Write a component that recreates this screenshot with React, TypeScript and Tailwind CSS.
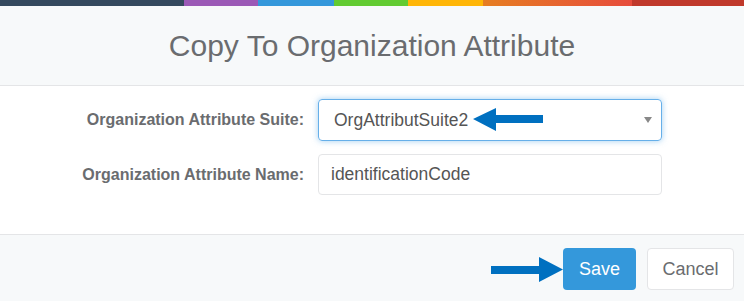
import React from "react";

const font = { fontFamily: '"Liberation Sans", Arial, sans-serif' };

function ArrowLeft() {
    return (
        <svg className="absolute left-[473px] top-[108px]" width="71" height="24" viewBox="0 0 71 24">
            <polygon points="0,11 23,0 23,7 70,7 70,15 23,15 23,23" fill="#0070c0" />
        </svg>
    );
}

function ArrowRight() {
    return (
        <svg className="absolute left-[491px] top-[257px]" width="73" height="26" viewBox="0 0 73 26">
            <polygon points="0,9 48,9 48,0 72,12.5 48,25 48,17 0,17" fill="#0070c0" />
        </svg>
    );
}

export default function App() {
    return (
        <div className="relative w-[744px] h-[301px] bg-white overflow-hidden text-[#6a6c6f]" style={font}>
            {/* color line */}
            <div className="h-[6px] w-full bg-[linear-gradient(to_right,#34495e_0%,#34495e_24.7%,#9b59b6_24.7%,#9b59b6_34.7%,#3498db_34.7%,#3498db_44.9%,#62cb31_44.9%,#62cb31_54.9%,#ffb606_54.9%,#ffb606_64.9%,#e67e22_64.9%,#e74c3c_85%,#c0392b_85%,#c0392b_100%)]" />

            <div className="h-[80px] bg-[#f7f9fa] border-b border-[#e4e5e7] flex items-center justify-center">
                <h4 className="text-[30px] text-[#6a6c6f] leading-none mt-[1px]">Copy To Organization Attribute</h4>
            </div>

            <div className="h-[148px] pt-[13px] flex flex-col gap-[13px]">
                <div className="flex items-center">
                    <label className="w-[304px] text-right text-[16px] font-bold text-[#6a6c6f]">Organization Attribute Suite:</label>
                    <div className="ml-[14px] w-[344px] h-[42px] rounded-[4px] border border-[#66afe9] shadow-[0_0_6px_rgba(102,175,233,0.6)] flex items-center justify-between pl-[15px] pr-[9px]">
                        <span className="text-[17.5px] text-[#555]">OrgAttributSuite2</span>
                        <span className="w-0 h-0 border-l-[4px] border-r-[4px] border-t-[6px] border-l-transparent border-r-transparent border-t-[#888]" />
                    </div>
                </div>
                <div className="flex items-center">
                    <label className="w-[304px] text-right text-[16px] font-bold text-[#6a6c6f]">Organization Attribute Name:</label>
                    <div className="ml-[14px] w-[344px] h-[41px] rounded-[4px] border border-[#e4e5e7] flex items-center pl-[12px]">
                        <span className="text-[17.5px] text-[#555]">identificationCode</span>
                    </div>
                </div>
            </div>

            <div className="h-[67px] bg-[#f7f9fa] border-t border-[#e4e5e7] flex justify-end items-start pt-[13px] pr-[10px] gap-[11px]">
                <button className="w-[73px] h-[42px] rounded-[4px] bg-[#3498db] text-white text-[18px]">Save</button>
                <button className="w-[87px] h-[42px] rounded-[4px] bg-white border border-[#e4e5e7] text-[#6a6c6f] text-[18px]">Cancel</button>
            </div>

            <ArrowLeft />
            <ArrowRight />
        </div>
    );
}
